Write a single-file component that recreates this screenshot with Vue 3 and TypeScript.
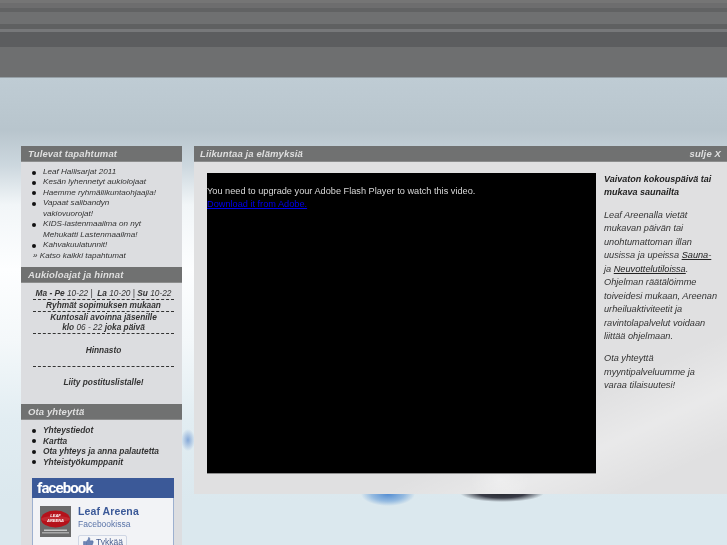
<script setup lang="ts">
const events: string[][] = [
  ['Leaf Hallisarjat 2011'],
  ['Kesän lyhennetyt aukiolojaat'],
  ['Haemme ryhmäliikuntaohjaajia!'],
  ['Vapaat salibandyn', 'vakiovuorojat!'],
  ['KIDS-lastenmaailma on nyt', 'Mehukatti Lastenmaailma!'],
  ['Kahvakuulatunnit!'],
]
const contacts: string[] = ['Yhteystiedot', 'Kartta', 'Ota yhteys ja anna palautetta', 'Yhteistyökumppanit']
</script>

<template>
  <div class="page">
    <div class="band"></div>
    <div class="content">
      <aside class="side">
        <h2 class="bar">Tulevat tapahtumat</h2>
        <div class="block events">
          <ul>
            <li v-for="e in events" :key="e[0]">
              <template v-for="(l, i) in e" :key="l"><br v-if="i" />{{ l }}</template>
            </li>
          </ul>
          <p class="all">» Katso kaikki tapahtumat</p>
        </div>

        <h2 class="bar">Aukioloajat ja hinnat</h2>
        <div class="block hours">
          <p class="row one"><b>Ma - Pe</b> 10-22 | &nbsp;<b>La</b> 10-20 | <b>Su</b> 10-22</p>
          <p class="row two"><b>Ryhmät sopimuksen mukaan</b></p>
          <p class="row three"><b>Kuntosali avoinna jäsenille</b><br /><b>klo</b> 06 - 22 <b>joka päivä</b></p>
          <p class="row four"><b>Hinnasto</b></p>
          <p class="five"><b>Liity postituslistalle!</b></p>
        </div>

        <h2 class="bar">Ota yhteyttä</h2>
        <div class="block contact">
          <ul>
            <li v-for="c in contacts" :key="c">{{ c }}</li>
          </ul>
          <div class="fb">
            <div class="fb-head">facebook</div>
            <div class="fb-body">
              <svg class="fb-logo" width="31" height="31" viewBox="0 0 31 31">
                <rect width="31" height="31" fill="#6b6b6b" />
                <ellipse cx="15.5" cy="13" rx="14.5" ry="8.5" fill="#b5121b" />
                <ellipse cx="15.5" cy="13" rx="14.500" ry="3" fill="#d8555a" opacity=".35" />
                <text x="15.5" y="10.500" text-anchor="middle" class="lg">LEAF</text>
                <text x="15.5" y="15.500" text-anchor="middle" class="lg">AREENA</text>
                <rect x="4" y="23.500" width="23" height="1.500" fill="#c4c4c4" />
                <rect x="2" y="26" width="27" height="1.500" fill="#a8a8a8" />
              </svg>
              <div class="fb-info">
                <div class="fb-name">Leaf Areena</div>
                <div class="fb-sub">Facebookissa</div>
                <div class="fb-like">
                  <svg width="11" height="10" viewBox="0 0 11 10">
                    <path d="M.5 4.500h2v5h-2zM3 4.800 5.300 2.200 5.600.4c1 0 1.400 1 1.200 2l-.3 1.400h3c.7 0 .9.8.5 1.200.3.4.2 1-.2 1.200.2.5 0 1-.4 1.200.1.6-.2 1.100-.8 1.100H5.200C4.300 9.500 3.700 9.100 3 8.800z" fill="#6d84b4" stroke="#3b5998" stroke-width=".4" />
                  </svg>
                  <span>Tykkää</span>
                </div>
              </div>
            </div>
          </div>
        </div>
      </aside>

      <main class="main">
        <h2 class="bar main-bar"><span>Liikuntaa ja elämyksiä</span><span>sulje X</span></h2>
        <div class="main-body">
          <div class="flash">
            <p>You need to upgrade your Adobe Flash Player to watch this video.<br /><a href="#">Download it from Adobe.</a></p>
          </div>
          <div class="copy">
            <p class="lead"><b>Vaivaton kokouspäivä tai mukava saunailta</b></p>
            <p>Leaf Areenalla vietät mukavan päivän tai unohtumattoman illan uusissa ja upeissa <a href="#">Sauna-</a><br />ja <a href="#">Neuvottelutiloissa</a>. Ohjelman räätälöimme toiveidesi mukaan, Areenan urheiluaktiviteetit ja ravintolapalvelut voidaan liittää ohjelmaan.</p>
            <p>Ota yhteyttä myyntipalveluumme ja varaa tilaisuutesi!</p>
          </div>
        </div>
      </main>
    </div>
  </div>
</template>

<style>
html, body { margin: 0; overflow: hidden; }
</style>

<style scoped>
.page {
  width: 727px;
  height: 545px;
  overflow: hidden;
  font-family: "Liberation Sans", Arial, sans-serif;
  color: #333;
  filter: blur(.35px);
  background:
    radial-gradient(ellipse 7px 11px at 188px 440px, rgba(95,140,205,.7), rgba(95,140,205,0) 100%),
    radial-gradient(ellipse 27px 12px at 388px 494px, rgba(60,125,205,.85) 0, rgba(100,155,215,.6) 60%, rgba(150,190,225,0) 100%),
    radial-gradient(ellipse 42px 9px at 502px 493px, #23262e 0, #3a3d48 55%, rgba(60,65,80,0) 100%),
    linear-gradient(180deg, #bfccd4 78px, #b8c5cd 130px, #ccd7de 165px, #f2f6f8 205px, #fdfeff 270px, #f4f8fa 340px, #e2edf2 420px, #dbe8ee 500px);
}
.band {
  height: 78px;
  background: linear-gradient(180deg,
    #757575 0 3px, #6d6d6e 3px 8px, #616263 8px 12px, #6f7071 12px 24px,
    #5f6061 24px 29px, #77787a 29px 32px, #5c5d5f 32px 47px, #6e6f70 47px 77px, #96a0a6 77px 78px);
}
.content {
  display: flex;
  align-items: flex-start;
  gap: 12px;
  padding: 68px 0 0 21px;
}
.side {
  width: 161px;
  flex: none;
  background: #dcdde0;
}
.bar {
  margin: 0;
  height: 16px;
  padding: 0 0 0 7px;
  background: #707171;
  color: #dfdfdf;
  font: italic bold 9.500px/15px "Liberation Sans", Arial, sans-serif;
  letter-spacing: .12px;
  border-bottom: 1px solid #8c8d8d;
  box-sizing: border-box;
}
.block { font-size: 8.100px; font-style: italic; line-height: 10.450px; }
.block ul { margin: 0; padding: 0 0 0 22px; list-style: none; }
.block li { position: relative; }
.block li::before {
  content: "";
  position: absolute;
  left: -11px;
  top: 3.500px;
  width: 4px;
  height: 4px;
  border-radius: 50%;
  background: #111;
}
.block p { margin: 0; }
.events { height: 105px; padding-top: 5px; box-sizing: border-box; }
.all { padding-left: 12px; }
.hours { height: 121px; box-sizing: border-box; padding: 5px 8px 0 12px; text-align: center; font-size: 8.300px; }
.row { border-bottom: 1px dashed #333; }
.one { height: 11px; }
.two { height: 11px; }
.three { height: 21px; }
.four { padding-top: 11px; height: 21px; }
.five { padding-top: 10px; }
.contact { height: 124px; padding-top: 5px; font-weight: bold; font-size: 8.400px; }
.contact li { line-height: 10.500px; }
.fb {
  margin: 11px 8px 0 11px;
  height: 80px;
  background: #f2f3f6;
  border: 1px solid #9db0cf;
  border-top: 0;
  font-style: normal;
  font-weight: normal;
}
.fb-head {
  height: 20px;
  margin: 0 -1px;
  background: #3b5998;
  color: #fff;
  font: bold 15px/21px Roboto, "Liberation Sans", sans-serif;
  letter-spacing: -.9px;
  padding-left: 5px;
}
.fb-body { display: flex; gap: 7px; padding: 7px 0 0 7px; }
.fb-logo { flex: none; margin-top: 1px; }
.lg { font: italic bold 4px "Liberation Sans", sans-serif; fill: #fff; }
.fb-name { color: #3b5998; font: bold 10.500px/13px "Liberation Sans", Arial, sans-serif; letter-spacing: .1px; }
.fb-sub { color: #5a74a8; font-size: 8.500px; line-height: 13px; }
.fb-like {
  display: flex; align-items: center; gap: 2px;
  width: 49px; height: 14px; margin-top: 4px; padding-left: 4px;
  box-sizing: border-box;
  background: #f4f5f8; border: 1px solid #cfd6e4; border-radius: 2px;
  color: #4a5f90; font-size: 8.500px;
}
.main { width: 533px; flex: none; }
.main-bar { display: flex; justify-content: space-between; padding: 0 6px; }
.main-body {
  display: flex;
  height: 332px;
  box-sizing: border-box;
  padding: 11px 0 0 13px;
  background:
    radial-gradient(ellipse 30px 22px at 306px 318px, rgba(255,255,255,.3), rgba(255,255,255,0) 100%),
    linear-gradient(155deg, rgba(255,255,255,0) 72%, rgba(255,255,255,.3) 82%, rgba(255,255,255,0) 92%),
    #e0e0e1;
}
.flash {
  width: 389px;
  height: 300px;
  flex: none;
  background: #000;
  color: #d8d8d8;
  font-size: 9.200px;
  line-height: 13px;
  box-shadow: 0 1px 0 #8d8d8d;
}
.flash p { margin: 12px 0 0; }
.flash a { color: #0000ee; }
.copy {
  width: 115px;
  padding: 0 0 0 8px;
  font-size: 9.200px;
  font-style: italic;
  line-height: 13.450px;
}
.copy p { margin: 0 0 9px; }
.copy a { color: #222; text-decoration: underline; }
.lead { color: #222; font-size: 9px; }
</style>
